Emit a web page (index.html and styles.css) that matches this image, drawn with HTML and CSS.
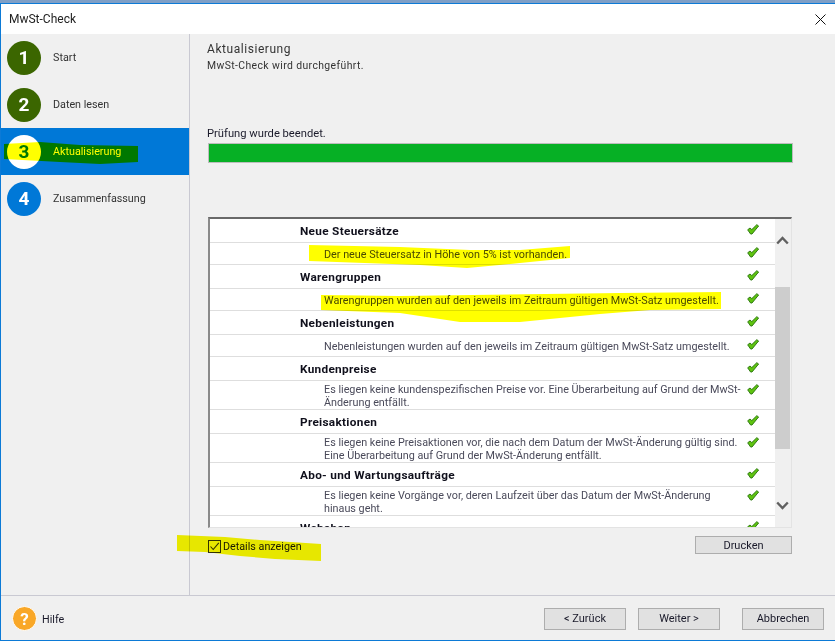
FILE: index.html
```html
<!DOCTYPE html>
<html lang="de">
<head>
<meta charset="utf-8">
<title>MwSt-Check</title>
<link rel="stylesheet" href="styles.css">
</head>
<body>
<svg class="icon-defs" width="0" height="0" aria-hidden="true">
  <symbol id="check" viewBox="0 0 12 11">
    <path d="M0.7 5.8 L3 4 L4.8 5.6 L9.8 0.7 L11.6 2 L5 10 L3.6 10 Z" fill="#5fc40f" stroke="#2f7a12" stroke-width="1" stroke-linejoin="round"/>
  </symbol>
</svg>
<div class="strip"></div>
<div class="window">
  <header class="titlebar">
    <span class="title">MwSt-Check</span>
    <svg class="close" width="11" height="11" viewBox="0 0 11 11"><path d="M0.5 0.5 L10.5 10.5 M10.5 0.5 L0.5 10.5" stroke="#111" stroke-width="1"/></svg>
  </header>
  <div class="body">
    <nav class="sidebar">
      <div class="step"><span class="num num-done">1</span><span class="step-text">Start</span></div>
      <div class="step"><span class="num num-done">2</span><span class="step-text">Daten lesen</span></div>
      <div class="step step-active"><span class="num num-active">3</span><span class="step-text">Aktualisierung</span></div>
      <div class="step"><span class="num num-todo">4</span><span class="step-text">Zusammenfassung</span></div>
    </nav>
    <main class="main">
      <h1 class="heading">Aktualisierung</h1>
      <p class="subheading">MwSt-Check wird durchgeführt.</p>
      <p class="status">Prüfung wurde beendet.</p>
      <div class="progress"><div class="progress-fill"></div></div>
      <section class="list">
        <div class="rows">
          <div class="row row-head"><span class="label">Neue Steuersätze</span><svg class="ok"><use href="#check"/></svg></div>
          <div class="row row-one"><span class="detail">Der neue Steuersatz in Höhe von 5% ist vorhanden.</span><svg class="ok"><use href="#check"/></svg></div>
          <div class="row row-head"><span class="label">Warengruppen</span><svg class="ok"><use href="#check"/></svg></div>
          <div class="row row-one"><span class="detail">Warengruppen wurden auf den jeweils im Zeitraum gültigen MwSt-Satz umgestellt.</span><svg class="ok"><use href="#check"/></svg></div>
          <div class="row row-head"><span class="label">Nebenleistungen</span><svg class="ok"><use href="#check"/></svg></div>
          <div class="row row-one"><span class="detail">Nebenleistungen wurden auf den jeweils im Zeitraum gültigen MwSt-Satz umgestellt.</span><svg class="ok"><use href="#check"/></svg></div>
          <div class="row row-head"><span class="label">Kundenpreise</span><svg class="ok"><use href="#check"/></svg></div>
          <div class="row row-two"><span class="detail">Es liegen keine kundenspezifischen Preise vor. Eine Überarbeitung auf Grund der MwSt-<br>Änderung entfällt.</span><svg class="ok"><use href="#check"/></svg></div>
          <div class="row row-head"><span class="label">Preisaktionen</span><svg class="ok"><use href="#check"/></svg></div>
          <div class="row row-two"><span class="detail">Es liegen keine Preisaktionen vor, die nach dem Datum der MwSt-Änderung gültig sind.<br>Eine Überarbeitung auf Grund der MwSt-Änderung entfällt.</span><svg class="ok"><use href="#check"/></svg></div>
          <div class="row row-head"><span class="label">Abo- und Wartungsaufträge</span><svg class="ok"><use href="#check"/></svg></div>
          <div class="row row-two"><span class="detail">Es liegen keine Vorgänge vor, deren Laufzeit über das Datum der MwSt-Änderung<br>hinaus geht.</span><svg class="ok"><use href="#check"/></svg></div>
          <div class="row row-head"><span class="label">Webshop</span><svg class="ok"><use href="#check"/></svg></div>
        </div>
        <div class="scrollbar">
          <svg class="chev chev-up" width="13" height="9" viewBox="0 0 13 9"><path d="M1.2 7.5 L6.5 2 L11.8 7.5" fill="none" stroke="#606060" stroke-width="2.4"/></svg>
          <div class="thumb"></div>
          <svg class="chev chev-down" width="13" height="9" viewBox="0 0 13 9"><path d="M1.2 1.5 L6.5 7 L11.8 1.5" fill="none" stroke="#606060" stroke-width="2.4"/></svg>
        </div>
      </section>
      <div class="under-list">
        <label class="details">
          <span class="box"><svg width="11" height="11" viewBox="0 0 11 11"><path d="M1.5 5.5 L4.2 8.5 L9.8 1.8" fill="none" stroke="#333" stroke-width="1.1"/></svg></span>
          Details anzeigen
        </label>
        <button class="btn btn-print">Drucken</button>
      </div>
    </main>
  </div>
  <footer class="footer">
    <div class="help">
      <span class="help-icon">?</span>
      <span class="help-text">Hilfe</span>
    </div>
    <div class="actions">
      <button class="btn btn-nav">&lt; Zurück</button>
      <button class="btn btn-nav btn-next">Weiter &gt;</button>
      <button class="btn btn-nav">Abbrechen</button>
    </div>
  </footer>
</div>
<svg class="marker" width="835" height="641" viewBox="0 0 835 641" aria-hidden="true">
  <path class="ink" d="M4 144 L40 142 L80 145 L138 146 L138 162 L100 164 L60 162 L4 159 Z"/>
  <path class="ink" d="M309 245 L400 247 L470 250 L520 250 L570 246 L570 258 L520 263 L467 268 L420 265 L309 261 Z"/>
  <path class="ink" d="M321 295 L400 296 L620 293 L721 292 L721 309 L650 310 L600 314 L520 322 L460 322 L400 313 L321 310 Z"/>
  <path class="ink ink-soft" d="M177 535 L225 537 L260 540 L321 544 L321 561 L275 559 L240 556 L205 552 L177 551 Z"/>
</svg>
</body>
</html>
```
FILE: styles.css
```css
* { box-sizing: border-box; }
html, body { margin: 0; padding: 0; }
body {
  width: 835px;
  height: 641px;
  overflow: hidden;
  position: relative;
  display: flex;
  flex-direction: column;
  font-family: Roboto, "Liberation Sans", sans-serif;
  font-size: 10.75px;
  color: #1a1a2a;
  background: #f0f0f0;
}
.icon-defs { position: absolute; }
.strip { height: 3px; background: #7f9fc6; flex: none; }
.window {
  flex: 1;
  display: flex;
  flex-direction: column;
  min-height: 0;
  border-top: 1px solid #0c7ad6;
  border-left: 1px solid #0c7ad6;
  border-bottom: 1px solid #0c7ad6;
}
.titlebar {
  height: 30px;
  flex: none;
  background: #fff;
  display: flex;
  align-items: center;
  justify-content: space-between;
  padding: 0 9px 0 8px;
}
.title { font-size: 12px; color: #222; }
.body { flex: 1; display: flex; min-height: 0; }
.sidebar {
  width: 189px;
  flex: none;
  border-right: 1px solid #c9c9d2;
  background: #f0f0f0;
}
.step {
  height: 47px;
  display: flex;
  align-items: center;
  gap: 12px;
  padding-left: 6px;
  color: #333;
}
.step-text { margin-top: -1px; }
.step-active { background: #0078d7; color: #fff; }
.num {
  width: 34px;
  height: 34px;
  border-radius: 50%;
  display: flex;
  align-items: center;
  justify-content: center;
  font-weight: 700;
  font-size: 19px;
  color: #fff;
}
.num-done { background: #3b6600; }
.num-active { background: #fff; color: #0078d7; }
.num-todo { background: #0078d7; }
.main {
  flex: 1;
  padding: 8px 41px 0 18px;
  min-width: 0;
}
.heading {
  margin: 0 0 0 -1px;
  font-size: 12px;
  font-weight: 400;
  line-height: 15px;
  letter-spacing: 0.55px;
  color: #333;
}
.subheading {
  margin: 2px 0 0 -1px;
  font-size: 10.4px;
  line-height: 14px;
  letter-spacing: 0.4px;
  color: #333;
}
.status { margin: 53px 0 0 -1px; line-height: 15px; height: 15px; font-size: 11.2px; }
.progress {
  margin-top: 2px;
  height: 20px;
  border: 1px solid #bdbdbd;
  background: #e6e6e6;
  width: 585px;
}
.progress-fill { height: 100%; background: #06b025; }
.list {
  margin-top: 54px;
  height: 311px;
  display: flex;
  overflow: hidden;
  border-top: 2px solid #696969;
  border-left: 2px solid #8a8a8a;
  border-right: 1px solid #e3e3e3;
  border-bottom: 1px solid #e3e3e3;
  width: 584px;
  background: #fff;
}
.rows { flex: 1; min-width: 0; overflow: hidden; }
.row {
  display: flex;
  align-items: center;
  justify-content: space-between;
  border-bottom: 1px solid #dedede;
  padding-right: 16px;
  color: #4a4a5a;
}
.row-head { height: 24px; padding-left: 90px; }
.row-one { height: 22px; padding-left: 114px; }
.row-two { height: 29px; padding-left: 114px; }
.row-two .ok { align-self: flex-start; margin-top: 3px; }
.label { font-weight: 700; font-size: 11.8px; letter-spacing: 0.3px; color: #10101c; }
.detail { line-height: 13px; margin-top: 2px; font-size: 10.8px; }
.ok { width: 12px; height: 11px; flex: none; margin-top: -2px; }
.scrollbar {
  width: 16px;
  flex: none;
  background: #f0f0f0;
  position: relative;
}
.thumb {
  position: absolute;
  top: 68px;
  left: 0;
  width: 15px;
  height: 162px;
  background: #cdcdcd;
}
.chev { position: absolute; left: 1px; }
.chev-up { top: 17px; }
.chev-down { top: 282px; }
.under-list {
  display: flex;
  align-items: flex-start;
  justify-content: space-between;
  width: 584px;
  padding-top: 8px;
}
.details { display: flex; align-items: center; gap: 2px; color: #1a1a2a; margin-top: 4px; }
.box {
  width: 13px;
  height: 13px;
  border: 1px solid #333;
  background: #f0f0f0;
  display: flex;
  align-items: center;
  justify-content: center;
}
.btn {
  font-family: inherit;
  font-size: 11px;
  color: #1a1a2a;
  background: #e1e1e1;
  border: 1px solid #adadad;
  padding: 0;
  border-radius: 0;
}
.btn-print { width: 97px; height: 18px; }
.footer {
  height: 45px;
  flex: none;
  border-top: 1px solid #c9c9d2;
  display: flex;
  align-items: center;
  justify-content: space-between;
  padding: 1px 11px 0 11px;
}
.help { display: flex; align-items: center; gap: 5px; }
.help-text { margin-top: 1px; }
.help-icon {
  width: 25px;
  height: 25px;
  border-radius: 50%;
  background: #f9a727;
  border: 1px solid #fff;
  color: #fff;
  font-weight: 700;
  font-size: 17px;
  display: flex;
  align-items: center;
  justify-content: center;
}
.actions { display: flex; gap: 22px; }
.btn-nav { width: 82px; height: 22px; }
.btn-next { margin-left: -10px; }
.marker {
  position: absolute;
  top: 0;
  left: 0;
  pointer-events: none;
  mix-blend-mode: multiply;
}
.ink { fill: #ffff00; }
.ink-soft { fill: #f6f600; }
```
